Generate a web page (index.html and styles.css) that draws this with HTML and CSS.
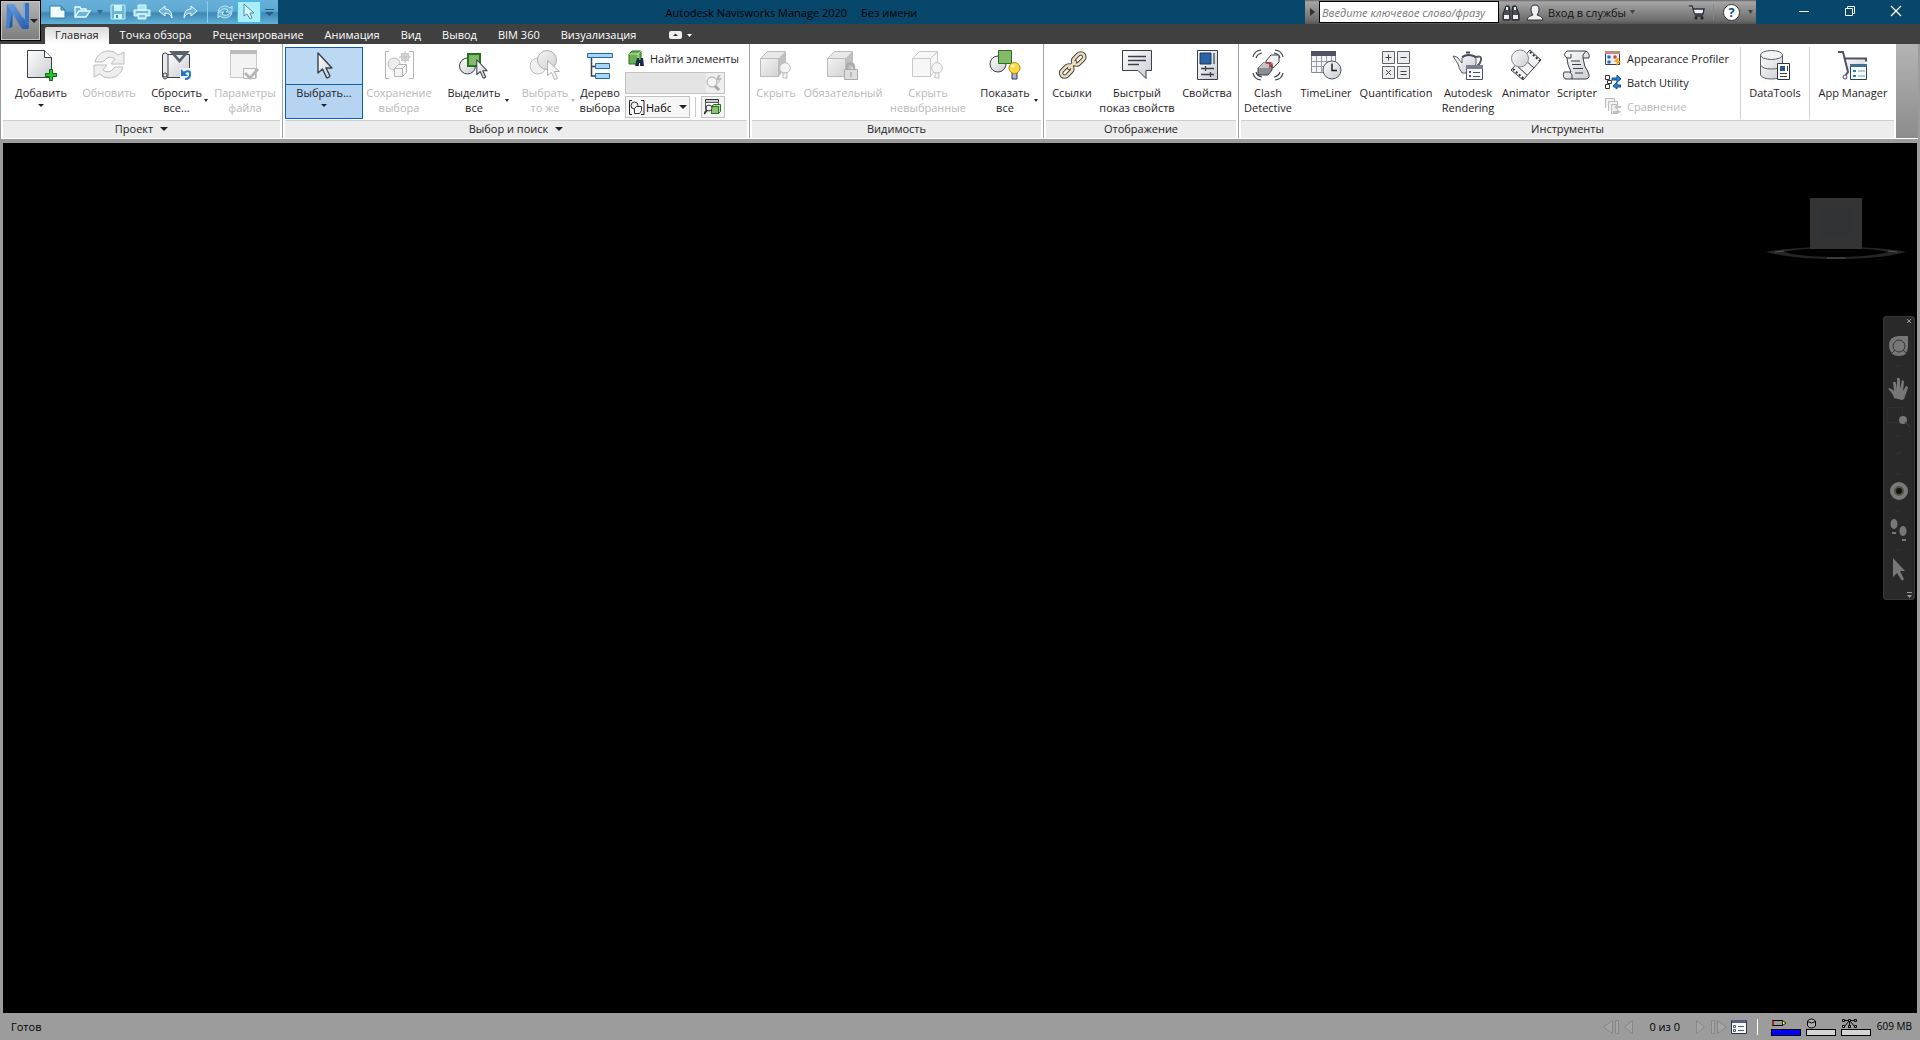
FILE: index.html
```html
<!DOCTYPE html>
<html lang="ru">
<head>
<meta charset="utf-8">
<title>Autodesk Navisworks Manage 2020</title>
<link rel="stylesheet" href="styles.css">
</head>
<body>
<svg class="defs" width="0" height="0" aria-hidden="true">
  <defs>
    <linearGradient id="paper" x1="0" y1="0" x2="1" y2="1"><stop offset="0" stop-color="#fff"/><stop offset="1" stop-color="#c9cbd0"/></linearGradient>
    <linearGradient id="dim" x1="0" y1="0" x2="1" y2="1"><stop offset="0" stop-color="#f4f4f4"/><stop offset="1" stop-color="#d2d2d2"/></linearGradient>
    <linearGradient id="blade" x1="0" y1="0" x2="1" y2="1"><stop offset="0" stop-color="#6ba4e4"/><stop offset="1" stop-color="#2358a8"/></linearGradient>
    <symbol id="cursor" viewBox="0 0 16 27"><path d="M1 1v20l4.500-4 4 8.500q2 1 3.500-1.500l-4-8h6z" fill="url(#paper)" stroke="#3a3f4a" stroke-width="1.400" stroke-linejoin="round"/></symbol>
    <symbol id="bulb" viewBox="0 0 12 18"><circle cx="6" cy="6" r="5.300"/><path d="M4 11h4v5H4z"/></symbol>
  </defs>
</svg>

<header class="titlebar">
  <button class="app-button" aria-label="Меню приложения">
    <svg width="40" height="40" viewBox="0 0 40 40"><path d="M6 3h6v23l-7 2z" fill="#4a82cc"/><path d="M22 2h6v24l-6-6z" fill="#3b72bd"/><path d="M6 3h7l10 16 5 7-1 2h-6L11 12z" fill="url(#blade)"/><path d="M11 12v14l-3 1z" fill="#2a5699"/><path d="M22 2h2v17l-2-3z" fill="#77abe8"/><path d="M29 18h8l-4 4z" fill="#222"/></svg>
  </button>
  <div class="quick">
    <button aria-label="Создать"><svg width="18" height="16" viewBox="0 0 18 16"><path d="M1 2h11l4 4v8H1zM12 2v4h4" fill="#eefcff" stroke="#2f7da5"/></svg></button>
    <button aria-label="Открыть"><svg width="18" height="16" viewBox="0 0 18 16"><path d="M2 13V3h5l1 2h5v2M2 13l4-6h11l-4 6z" fill="#6fb4d5" stroke="#e8fcff" stroke-width="1.300"/></svg></button>
    <button class="slim" aria-label="Последние файлы"><svg width="6" height="4"><path d="M0 0h6L3 4z" fill="#2c6b91"/></svg></button>
    <button aria-label="Сохранить"><svg width="18" height="16" viewBox="0 0 18 16"><path d="M2 1h14v14H2z" fill="#6fb4d5" stroke="#bff0fb"/><path d="M5 1h8v6H5zM5 10h8v5H5z" fill="#c8f6fb"/><path d="M7 11h2v3H7z" fill="#4288ae"/></svg></button>
    <button aria-label="Печать"><svg width="18" height="16" viewBox="0 0 18 16"><path d="M5 1h8v5H5zM1 6h16v6H1zM5 10h8v5H5z" fill="#a9e2f0" stroke="#d9faff"/><path d="M3 8h12M6 12h6" stroke="#4288ae"/></svg></button>
    <button aria-label="Отменить"><svg width="18" height="16" viewBox="0 0 18 16"><path d="M2 7l6-5v3q7 0 7 9-2-5-7-5v3z" fill="#6fb4d5" stroke="#e4fcff"/></svg></button>
    <button aria-label="Повторить"><svg width="18" height="16" viewBox="0 0 18 16"><path d="M16 7l-6-5v3Q3 5 3 14q2-5 7-5v3z" fill="#6fb4d5" stroke="#e4fcff"/></svg></button>
    <i></i>
    <button aria-label="Обновить"><svg width="18" height="16" viewBox="0 0 18 16"><path d="M2 7q2-5 7-5 3 0 5 2l2-2v6h-6l2-2q-4-3-8 1zM16 9q-2 5-7 5-3 0-5-2l-2 2V8h6l-2 2q4 3 8-1z" fill="#6fb4d5" stroke="#b9eaf7"/></svg></button>
    <button class="hot" aria-label="Выбрать"><svg width="12" height="18" viewBox="0 0 12 18"><path d="M1 1v12l3-2 3 5 2-1-2-5h4z" fill="#d8f8fd" stroke="#4a8fae"/></svg></button>
    <button class="more" aria-label="Настроить панель"><svg width="9" height="7"><path d="M0 0h9v1H0zM0 3h9L4.500 7z" fill="#225f86"/></svg></button>
  </div>
  <h1 class="caption"><span>Autodesk Navisworks Manage 2020</span><span>Без имени</span></h1>
  <div class="infocenter">
    <button class="fold" aria-label="Свернуть поиск"><svg width="5" height="8"><path d="M0 0l5 4-5 4z" fill="#333"/></svg></button>
    <input type="text" aria-label="Поиск" placeholder="Введите ключевое слово/фразу">
    <button class="find" aria-label="Найти"><svg width="18" height="17" viewBox="0 0 18 17"><path d="M4 2h3l1 4v10H1v-6zM14 2h-3l-1 4v10h7v-6z" fill="#4a4d55" stroke="#202020"/><path d="M2 11h5v4H2zM11 11h5v4h-5zM4 3h2v3H4zM12 3h2v3h-2z" fill="#eceef2"/></svg></button>
    <button class="sign"><svg width="18" height="17" viewBox="0 0 18 17"><path d="M9 1c-3 0-4 2-4 4s1 5 2 6c-2 1-5 1-6 5h16c-1-4-4-4-6-5 1-1 2-4 2-6s-1-4-4-4z" fill="#f0f1f4" stroke="#2a2c33"/></svg><span>Вход в службы</span><svg width="5" height="4"><path d="M0 0h5L2.500 4z" fill="#444"/></svg></button>
    <button class="cart" aria-label="Магазин"><svg width="18" height="16" viewBox="0 0 18 16"><path d="M1 2h3l3 8h8l1-5H5" fill="#f2f2f2" stroke="#2d3146" stroke-width="1.500"/><path d="M6 6h9l-1 3H7z" fill="#f2f2f2"/><path d="M7 12h8" stroke="#2d3146" stroke-width="1.500"/><circle cx="8" cy="14" r="1.500" fill="#222"/><circle cx="14" cy="14" r="1.500" fill="#222"/></svg></button>
    <button class="help" aria-label="Справка"><b>?</b><svg width="5" height="4"><path d="M0 0h5L2.500 4z" fill="#444"/></svg></button>
  </div>
  <div class="window-controls">
    <button aria-label="Свернуть"><svg width="12" height="12"><path d="M1 6.500h10" stroke="#fff"/></svg></button>
    <button aria-label="Восстановить"><svg width="12" height="12"><path d="M1.500 3.500h7v7h-7zM3.500 3.500v-2h7v7h-2" fill="none" stroke="#fff"/></svg></button>
    <button aria-label="Закрыть"><svg width="12" height="12"><path d="M1 1l10 10M11 1L1 11" stroke="#fff" stroke-width="1.300"/></svg></button>
  </div>
</header>

<nav class="tabs">
  <a class="active" href="#home">Главная</a><a href="#view">Точка обзора</a><a href="#review">Рецензирование</a><a href="#anim">Анимация</a><a href="#look">Вид</a><a href="#out">Вывод</a><a href="#bim">BIM 360</a><a href="#render">Визуализация</a>
  <button aria-label="Свернуть ленту"><svg width="24" height="8" viewBox="0 0 24 8"><rect width="13" height="8" rx="2" fill="#eee"/><path d="M4 5h5L6.500 2.500z" fill="#333"/><path d="M18 3h5l-2.500 3z" fill="#fff"/></svg></button>
</nav>

<main class="ribbon">
  <section class="panel">
    <div class="tools project">
      <button class="tool"><svg class="ico" viewBox="0 0 32 32"><path d="M2.500 1.500h17l7 7v20h-24z" fill="url(#paper)" stroke="#3a3f4a"/><path d="M19.500 1.500v7h7" fill="#fff" stroke="#3a3f4a"/><path d="M24.500 20.500h3v4h4v3h-4v4h-3v-4h-4v-3h4z" fill="#2fbf2f" stroke="#0b6d10"/></svg><span>Добавить</span><em></em></button>
      <button class="tool" disabled><svg class="ico" viewBox="0 0 32 32"><path d="M2 13C4 5 10 2 16 2q6 0 9 4l6-3v12H18l4-5q-6-5-12 3zM30 18c-2 8-8 11-14 11q-6 0-9-4l-6 3V16h13l-4 5q6 5 12-3z" fill="#eee" stroke="#bdbdbd"/></svg><span>Обновить</span></button>
      <button class="tool side"><svg class="ico" viewBox="0 0 32 32"><path d="M5.500 5.500h23v23h-23z" fill="url(#paper)" stroke="#3a3f4a"/><path d="M1.500 6q0-2 2.500-2t3 2v21q-1 3-3 3t-2.500-3z" fill="#e9eaee" stroke="#3a3f4a"/><circle cx="4" cy="26" r="2" fill="none" stroke="#3a3f4a"/><path d="M8 2h21L18.500 14z" fill="#596070"/><path d="M15 6h7l-3.500 4z" fill="#e9e9ee"/><path d="M19 19h11v12H19z" fill="#f4f4f6"/><path d="M22 24q7-4 7 1t-5 5" fill="none" stroke="#1c74c9" stroke-width="2"/><path d="M20 20v7h7z" fill="#1c74c9"/></svg><span>Сбросить<br>все...</span><em></em></button>
      <button class="tool" disabled><svg class="ico" viewBox="0 0 32 32"><path d="M1.500 2.500h26v26h-26z" fill="#f3f3f3" stroke="#c9c9c9"/><path d="M1 1h27v4H1z" fill="#bcbcbc"/><path d="M14.500 19.500h12v10h-12z" fill="#f8f8f8" stroke="#b5b5b5"/><path d="M17 23l4 4 7-8 2 2-9 10-6-6z" fill="#b5b5b5"/></svg><span>Параметры<br>файла</span></button>
    </div>
    <h2 class="drop">Проект</h2>
  </section>

  <section class="panel">
    <div class="tools select">
      <button class="tool chosen"><svg class="ico" viewBox="0 0 32 32"><use href="#cursor" x="9" y="3" width="16" height="27"/></svg><span>Выбрать...</span><em></em></button>
      <button class="tool" disabled><svg class="ico" viewBox="0 0 32 32"><path d="M6 2.500H2.500v27H6M26 2.500h4.500v27H26" fill="none" stroke="#b5b5b5"/><circle cx="11" cy="15" r="6" fill="#eee" stroke="#bbb"/><path d="M11.500 19.500l4-4h8v8l-4 4h-8zM11.500 19.500h8v8M19.500 19.500l4-4" fill="#f4f4f4" stroke="#b5b5b5"/><circle cx="22" cy="8" r="4" fill="#ddd" stroke="#c2c2c2"/><path d="M22 2v12M16 8h12M18 4l8 8M26 4l-8 8" stroke="#c2c2c2"/></svg><span>Сохранение<br>выбора</span></button>
      <button class="tool side"><svg class="ico" viewBox="0 0 32 32"><circle cx="9.500" cy="17" r="8" fill="url(#paper)" stroke="#3a3f4a"/><path d="M10 5h12v12H10z" fill="#83b969" stroke="#23721d" stroke-width="2"/><use href="#cursor" x="18" y="10" width="12" height="20"/></svg><span>Выделить<br>все</span><em></em></button>
      <button class="tool side narrow" disabled><svg class="ico" viewBox="0 0 32 32"><circle cx="9" cy="17" r="8" fill="#f1f1f1" stroke="#bdbdbd"/><circle cx="18" cy="11" r="9.500" fill="url(#dim)" stroke="#b0b0b0"/><path d="M18.500 11.500v15l4-3 3 7 3-1-3-7h5z" fill="#f6f6f6" stroke="#b0b0b0"/></svg><span>Выбрать<br>то же</span><em></em></button>
      <button class="tool"><svg class="ico" viewBox="0 0 32 32"><path d="M7.500 8v19H13M7.500 17.500H13" fill="none" stroke="#3a3f4a" stroke-width="1.500"/><path d="M3.500 4.500h25v4h-25zM11.500 14.500h14v5h-14zM11.500 24.500h14v5h-14z" fill="#a8d5f4" stroke="#1c6ca5"/></svg><span>Дерево<br>выбора</span></button>
      <div class="finder">
        <button class="row"><svg width="16" height="18" viewBox="0 0 16 18"><path d="M1 5l3-3h9v8l-3 5H1z" fill="#6cae55" stroke="#23721d"/><path d="M1 5h9v9M10 5l3-3" fill="none" stroke="#c4e5b0"/><path d="M9 9h2v2h2V9h2l1 8h-4v-3h-1v3H7z" fill="#1b2c4c"/></svg><span>Найти элементы</span></button>
        <div class="quickfind"><input type="text" disabled aria-label="Быстрый поиск"><button disabled aria-label="Искать"><svg width="16" height="18" viewBox="0 0 16 18"><circle cx="6" cy="8" r="5" fill="#f4f4f4" stroke="#a5a5a5"/><path d="M9 12l4 4" stroke="#a5a5a5" stroke-width="3"/><path d="M12 1l-2 5h3l-2 5 5-7h-3l2-3z" fill="#bbb"/></svg></button></div>
        <div class="sets">
          <div class="combo"><svg width="18" height="18" viewBox="0 0 18 18"><path d="M4 1.500H1.500v14H4M13 1.500h3v14h-3" fill="none" stroke="#222"/><circle cx="6.500" cy="6.500" r="3.500" fill="#eee" stroke="#333"/><path d="M6.500 9.500l2-2h5v4l-2 3h-5z" fill="#fff" stroke="#333"/></svg><select aria-label="Наборы"><option>Наборы</option></select></div>
          <button class="inspect" aria-label="Инспектор выбора"><svg width="18" height="18" viewBox="0 0 18 18"><path d="M1.500 1.500h13v3h-13z" fill="#c9ccd2" stroke="#333"/><path d="M1.500 4.500h13v7h-13z" fill="#fff" stroke="#555"/><path d="M7.500 8.500l2-2h7v7l-2 2h-7z" fill="#b7dca6" stroke="#23721d"/><path d="M7.500 8.500h7v7h-7z" fill="#8cc474" stroke="#23721d"/><circle cx="5" cy="10" r="3" fill="#eee" stroke="#333"/><path d="M3 12l-3 4" stroke="#333" stroke-width="2"/></svg></button>
        </div>
      </div>
    </div>
    <h2 class="drop">Выбор и поиск</h2>
  </section>

  <section class="panel">
    <div class="tools visible">
      <button class="tool" disabled><svg class="ico" viewBox="0 0 32 32"><path d="M.5 9.500l7-7h18v15l-7 10H.5z" fill="#e8e8e8" stroke="#bbb"/><path d="M.5 9.500h18v18H.5z" fill="url(#dim)" stroke="#bbb"/><path d="M18.500 9.500l7-7v15l-7 10z" fill="#bfbfbf"/><use href="#bulb" x="19" y="13" width="12" height="18" fill="#f3f3f3" stroke="#bbb"/></svg><span>Скрыть</span></button>
      <button class="tool" disabled><svg class="ico" viewBox="0 0 32 32"><path d="M.5 9.500l7-7h18v15l-7 10H.5z" fill="#e8e8e8" stroke="#bbb"/><path d="M.5 9.500h18v18H.5z" fill="url(#dim)" stroke="#bbb"/><path d="M18.500 9.500l7-7v15l-7 10z" fill="#bfbfbf"/><path d="M20 21v-3q0-3.500 3.500-3.500T27 18v3" fill="none" stroke="#aaa" stroke-width="2.500"/><path d="M17.500 20.500h13v10h-13z" fill="#ddd" stroke="#aaa"/><path d="M24 23v5" stroke="#999"/></svg><span>Обязательный</span></button>
      <button class="tool" disabled><svg class="ico" viewBox="0 0 32 32"><path d="M.5 9.500l7-7h18v15l-7 10H.5z" fill="#f7f7f7" stroke="#c9c9c9"/><path d="M.5 9.500h18v18M18.500 9.500l7-7" fill="none" stroke="#c9c9c9"/><use href="#bulb" x="19" y="13" width="12" height="18" fill="#f5f5f5" stroke="#c4c4c4"/></svg><span>Скрыть<br>невыбранные</span></button>
      <button class="tool side"><svg class="ico" viewBox="0 0 32 32"><circle cx="9" cy="15" r="8" fill="url(#paper)" stroke="#3a3f4a"/><path d="M9.500 1.500h13v13h-13z" fill="#83b969" stroke="#23721d"/><path d="M23 24h5v6h-5z" fill="#aeb6c8" stroke="#333a50"/><circle cx="25.500" cy="19" r="5.500" fill="#ffd83c" stroke="#b5851a"/><circle cx="24" cy="17" r="2" fill="#fff3a8"/></svg><span>Показать<br>все</span><em></em></button>
    </div>
    <h2>Видимость</h2>
  </section>

  <section class="panel">
    <div class="tools display">
      <button class="tool"><svg class="ico" viewBox="0 0 32 32"><g fill="none" stroke-linecap="round"><g stroke="#4a4438" stroke-width="4.500"><rect x="4" y="19" width="13" height="7" rx="3.500" transform="rotate(-45 10 22)"/><rect x="16" y="7" width="13" height="7" rx="3.500" transform="rotate(-45 22 10)"/><path d="M13 19l6-6"/></g><g stroke="#ecdfc0" stroke-width="2.500"><rect x="4" y="19" width="13" height="7" rx="3.500" transform="rotate(-45 10 22)"/><rect x="16" y="7" width="13" height="7" rx="3.500" transform="rotate(-45 22 10)"/><path d="M13 19l6-6"/></g></g></svg><span>Ссылки</span></button>
      <button class="tool"><svg class="ico" viewBox="0 0 32 32"><path d="M1.500 1.500h29v20H25v8l-8-8H1.500z" fill="url(#paper)" stroke="#3a3f4a"/><path d="M7 7.500h18M7 11.500h18M7 15.500h11" stroke="#3a3f4a" stroke-width="1.500"/></svg><span>Быстрый<br>показ свойств</span></button>
      <button class="tool"><svg class="ico" viewBox="0 0 32 32"><path d="M6.500 1.500h20v29h-20z" fill="url(#paper)" stroke="#3a3f4a"/><path d="M9 4h11v11H9z" fill="#2b64a5" stroke="#1b3862"/><path d="M22 4h2v11h-2z" fill="#777f90"/><path d="M10 19.500h13M10 25.500h13M14.500 17v5M19.500 23v5" stroke="#3a3f4a" stroke-width="1.300"/></svg><span>Свойства</span></button>
    </div>
    <h2>Отображение</h2>
  </section>

  <section class="panel">
    <div class="tools instruments">
      <button class="tool"><svg class="ico" viewBox="0 0 32 32"><path d="M1 8q1-6 8-7M4 9q1-4 6-5M31 8q-1-6-8-7M28 9q-1-4-6-5M1 24q1 6 8 7M4 23q1 4 6 5M31 24q-1 6-8 7M28 23q-1 4-6 5" fill="none" stroke="#3a3f4a" stroke-width="1.200"/><path d="M14 12l5-6h8v7l-6 6h-7z" fill="#f2f2f4" stroke="#3a3f4a"/><path d="M6 19l5-5h9v7l-4 5H6z" fill="#8b8e94" stroke="#3a3f4a"/><path d="M6 19l5-5h9l-4 5z" fill="#c3c5c9"/><path d="M14 14h4v3h3" fill="none" stroke="#c8201c" stroke-width="1.500"/></svg><span>Clash<br>Detective</span></button>
      <button class="tool"><svg class="ico" viewBox="0 0 32 32"><path d="M1.500 3.500h24v20h-24z" fill="#f5f5f7" stroke="#858993"/><path d="M1 2h25v5H1z" fill="#4d5362"/><path d="M1 12.500h25M1 17.500h25M6.500 7v16M11.500 7v16M16.500 7v16M21.500 7v16" stroke="#9a9ea6"/><circle cx="22" cy="21" r="9" fill="url(#paper)" stroke="#4d5362"/><path d="M22 14.500v7h5" fill="none" stroke="#222" stroke-width="1.500"/></svg><span>TimeLiner</span></button>
      <button class="tool"><svg class="ico" viewBox="0 0 32 32"><path d="M2.500 2.500h12v12h-12zM17.500 2.500h12v12h-12zM2.500 17.500h12v12h-12zM17.500 17.500h12v12h-12z" fill="#ececef" stroke="#5f636c"/><path d="M5.500 8.500h6M8.500 5.500v6M20.500 8.500h6M6 21l5 5M11 21l-5 5M20.500 22.500h6M20.500 25.500h6" stroke="#444"/></svg><span>Quantification</span></button>
      <button class="tool"><svg class="ico" viewBox="0 0 32 32"><path d="M1 7l4 1 5 6V9q7-6 14 0v6l-4 9H10q-3-4-4-9z" fill="url(#paper)" stroke="#5a5e68"/><path d="M24 8q6-2 5 3t-6 7" fill="none" stroke="#555a66" stroke-width="2"/><path d="M10 8q6-4 14 0M14 3.500h4" fill="none" stroke="#444a57" stroke-width="2"/><path d="M14.500 16.500h16v14h-16z" fill="#f7f8fa" stroke="#4d5362"/><path d="M14 16h17v4H14z" fill="#7a808e"/><path d="M17 22h2v2h-2zM17 26h2v2h-2z" fill="#4d5362"/><path d="M21 23.500h7M21 27.500h7" stroke="#4d5362"/></svg><span>Autodesk<br>Rendering</span></button>
      <button class="tool"><svg class="ico" viewBox="0 0 32 32"><path d="M1 21L20 1l11 10-18 20z" fill="#f2f2f4" stroke="#3a3f4a"/><path d="M3 20l11 10M20 3l10 9" stroke="#333" stroke-width="2" stroke-dasharray="2 2"/><path d="M6 16l11 10M13 9l11 10" stroke="#333"/><circle cx="10" cy="9.500" r="8.500" fill="url(#paper)" stroke="#85888e"/></svg><span>Animator</span></button>
      <button class="tool"><svg class="ico" viewBox="0 0 32 32"><path d="M6 2h19q4 2 3 7h-6q1 9 5 14 3 6-2 7H5q-4-1-2-7h7Q6 15 6 9 1 6 6 2z" fill="url(#paper)" stroke="#3a3f4a"/><path d="M6 9h4V5M22 9V6l3-4M9 23q3 2 2 7" fill="none" stroke="#3a3f4a"/><path d="M10 12h9M11 15.500h9M12 19.500h10M14 24h8" stroke="#3a3f4a"/></svg><span>Scripter</span></button>
      <div class="list">
        <button class="row"><svg width="16" height="16" viewBox="0 0 16 16"><path d="M.5 1.500h14v13H.5z" fill="#eceef4" stroke="#3a3f4a"/><path d="M0 1h15v3H0z" fill="#b98f86"/><circle cx="4" cy="7" r="1.800" fill="#2d70c0"/><circle cx="10" cy="7" r="1.800" fill="#d24a32"/><circle cx="4" cy="12" r="1.800" fill="#2d70c0"/><path d="M12 8l-3 4h3l-1 4 5-5h-3l1-3z" fill="#ffa21b"/></svg><span>Appearance Profiler</span></button>
        <button class="row"><svg width="16" height="16" viewBox="0 0 16 16"><path d="M.5 1.500h4v4h-4zM2.500 6.500h4v3h-4zM.5 10.500h4v4h-4z" fill="#fff" stroke="#333"/><path d="M7 4h5V1l4 4-4 3V6H7zM16 11h-4V8l-4 4 4 3v-2h4z" fill="#1f86e0" stroke="#124f92" stroke-width="1"/></svg><span>Batch Utility</span></button>
        <button class="row" disabled><svg width="16" height="16" viewBox="0 0 16 16"><path d="M.5 10V.5h9V4M3.500 13V3.500h9V6" fill="#f3f3f3" stroke="#bbb"/><path d="M6.500 6.500h6v9h-6z" fill="#eee" stroke="#bbb"/><path d="M16 8h-3V6L9 9l4 3v-2h3zM8 13h4v-2l4 3-4 2v-1H8z" fill="#c2c2c2"/></svg><span>Сравнение</span></button>
      </div>
      <button class="tool ruled"><svg class="ico" viewBox="0 0 32 32"><path d="M1.500 6v20q2 4 11 4t11-4V6" fill="url(#paper)" stroke="#5a5e68"/><ellipse cx="12.500" cy="6" rx="11" ry="4.500" fill="#f4f4f6" stroke="#5a5e68"/><path d="M1.500 16q2 4 11 4t11-4" fill="none" stroke="#5a5e68"/><path d="M18.500 14.500h12v16h-12z" fill="#fff" stroke="#2f3440"/><path d="M21 17h5v5h-5z" fill="#28588f"/><path d="M28 17h1v5h-1zM21 24h7v1h-7zM21 27h7v1h-7z" fill="#3a3f4a"/></svg><span>DataTools</span></button>
      <button class="tool ruled"><svg class="ico" viewBox="0 0 32 32"><path d="M7 9h22l-3 12H10z" fill="url(#paper)"/><path d="M1 3h5l5 20-3 4M7 9.500h22v3" fill="none" stroke="#4d5267" stroke-width="2"/><circle cx="8" cy="28" r="2" fill="#fff" stroke="#4d5267"/><path d="M13.500 15.500h16v15h-16z" fill="#fff" stroke="#27455e"/><path d="M13 15h17v3H13z" fill="#3d6f96"/><path d="M16 21h3v2h-3zM16 26h3v2h-3z" fill="#1e86d0"/><path d="M21 22h7M21 27h7" stroke="#4f9dd0"/></svg><span>App Manager</span></button>
    </div>
    <h2>Инструменты</h2>
  </section>
</main>

<section class="canvas" aria-label="Сцена">
  <svg class="viewcube" width="142" height="62" viewBox="0 0 142 62"><path d="M1 54q22-5 70-5t70 5q-25 7-70 7T1 54zm18 0q18 5 52 5t52-5q-18-4-52-4t-52 4z" fill="#252525" fill-rule="evenodd"/><path d="M10 54l9-1M123 53l9 1M62 60h18" stroke="#555"/><rect x="45" width="52" height="51" fill="#343434"/><rect x="55" y="10" width="34" height="30" fill="#313436"/></svg>
  <div class="navbar">
    <svg width="32" height="284" viewBox="0 0 32 284"><g fill="#777"><path d="M24 3l4 4m0-4l-4 4" stroke="#999"/><path d="M6 30q0-10 10-10h9v10q0 10-9 10T6 30z"/><circle cx="16" cy="30" r="6" fill="none" stroke="#333"/><path d="M9 37l3-3M23 37l-3-3" stroke="#333"/><path d="M11 82q-1-5-6-9 2-2 6 2l-1-9q2-1 3 1l1 6V62q2-1 3 1v10l2-9q2 0 2 2l-1 9 3-5q2 0 2 2l-4 11-2 1z"/><path d="M4.500 91.500h15v15h-15z" fill="none" stroke="#303030"/><circle cx="20" cy="104" r="4"/><path d="M22 106l5 5" stroke="#444"/><path d="M13 50h4M13 120h4M13 138l6-2M13 158h4M13 195h4M13 234h4" stroke="#333"/></g><circle cx="16" cy="175" r="7" fill="#51523f" stroke="#7a7a7a" stroke-width="4"/><circle cx="16" cy="175" r="3" fill="#111"/><g fill="#777"><ellipse cx="11" cy="208" rx="3.500" ry="5"/><ellipse cx="20" cy="215" rx="3.500" ry="5"/><path d="M9 216h4v2H9zM19 223h4v2h-4zM10 242v19l4-4 5 8 2-2-4-8h5z"/><path d="M24 276h5v1h-5zM24 279h5l-2.500 3z" fill="#999"/></g></svg>
  </div>
</section>

<footer class="status">
  <span>Готов</span>
  <div class="sheets">
    <button disabled aria-label="Первый лист"><svg width="18" height="16"><path d="M10.500 1.500v13l-9-6.500zM13.500 1.500h3v13h-3z" fill="#a5a5a5" stroke="#868686"/></svg></button>
    <button disabled aria-label="Предыдущий лист"><svg width="12" height="16"><path d="M9.500 1.500v13L1.500 8z" fill="#a5a5a5" stroke="#868686"/></svg></button>
    <output>0 из 0</output>
    <button disabled aria-label="Следующий лист"><svg width="12" height="16"><path d="M1.500 1.500v13l8-6.500z" fill="#a5a5a5" stroke="#868686"/></svg></button>
    <button disabled aria-label="Последний лист"><svg width="18" height="16"><path d="M7.500 1.500v13l9-6.500zM1.500 1.500h3v13h-3z" fill="#a5a5a5" stroke="#868686"/></svg></button>
    <button aria-label="Браузер листов"><svg width="16" height="16"><path d="M.5 1.500h15v13H.5z" fill="#f5f6fa" stroke="#2e3440"/><path d="M1 1h14v3H1z" fill="#56607a"/><path d="M2.500 6.500h2v2h-2zM2.500 10.500h2v2h-2zM7 7.500h6M7 11.500h6" fill="none" stroke="#4e5a70"/></svg></button>
  </div>
  <div class="meters">
    <div><svg width="30" height="11"><path d="M1.500 2.500h10v5h-10z" fill="#9c9c9c" stroke="#000"/><path d="M1 3h2v4H1z" fill="#b02020"/><path d="M11.500 2.500L15 5l-3.500 2.500z" fill="#ff3" stroke="#222"/></svg><i class="full"></i></div>
    <div><svg width="30" height="11"><path d="M1.500 3v5q4 4 8 0V3q-4-4-8 0zM1.500 3.500q4 3 8 0" fill="#b0b0b0" stroke="#000"/></svg><i></i></div>
    <div><svg width="30" height="11"><path d="M2 2.500h13M8.500 2v8M8 3L3 9M9 3l5 6" stroke="#000"/><path d="M1.500 1.500h2v2h-2zM7.500 1.500h2v2h-2zM13.500 1.500h2v2h-2zM1.500 7.500h2v2h-2zM7.500 7.500h2v2h-2zM13.500 7.500h2v2h-2z" fill="#b0b0b0" stroke="#000"/></svg><i></i></div>
  </div>
  <span class="memory">609 MB</span>
</footer>
</body>
</html>
```

FILE: styles.css
```css
* { box-sizing: border-box; }
body {
  margin: 0;
  min-height: 100vh;
  display: flex;
  flex-direction: column;
  background: #9c9c9c;
  color: #1f2228;
  font: 11px/15px "Open Sans", "Noto Sans", sans-serif;
}
button, input, select { font: inherit; color: inherit; }
button { margin: 0; padding: 0; border: 0; background: none; }
h1, h2 { margin: 0; font: inherit; }
svg { display: block; flex: none; }
.defs { position: absolute; }

/* Title bar */
.titlebar { position: relative; display: flex; height: 24px; background: #06476b; }
.app-button {
  position: absolute; left: 0; top: 0; z-index: 2;
  width: 41px; height: 41px; overflow: hidden;
  border: 1px solid #000;
  background: linear-gradient(#b5b5b5, #7c7c7c);
  box-shadow: inset 0 0 0 1px #c4c4c4;
}
.quick {
  display: flex; align-items: center;
  width: 278px; padding-left: 46px;
  background: linear-gradient(#68b0d9, #5ea9d3 45%, #4187b3 55%, #5fb2d8);
}
.quick button { flex: none; width: 24px; height: 24px; display: grid; place-items: center; }
.quick .slim { width: 12px; }
.quick .hot { background: #a9eef8; border: 1px solid #38bdf0; height: 22px; }
.quick .more { width: 17px; }
.quick i { width: 1px; height: 22px; background: #8ccbe6; margin: 0 5px; }
.caption { flex: 1; display: flex; justify-content: center; align-items: center; gap: 14px; color: #000; }
.infocenter {
  display: flex; align-items: center; width: 451px;
  background: linear-gradient(#666, #a6a6a6 8%, #6c6c6c 85%, #555);
}
.fold { width: 14px; display: grid; place-items: center; }
.infocenter input {
  width: 180px; height: 22px; padding: 0 2px;
  border: 1px solid #000; background: #fff; font-style: italic;
}
.infocenter input::placeholder { color: #777; opacity: 1; }
.find { padding: 0 3px; }
.sign { display: flex; align-items: center; gap: 4px; padding-left: 3px; color: #111; }
.cart { margin-left: auto; padding-right: 7px; border-right: 1px solid #888; }
.help { display: flex; align-items: center; gap: 8px; padding: 0 3px 0 9px; }
.help b { width: 17px; height: 17px; border: 1px solid #333; border-radius: 50%; background: #fff; color: #0c4d9e; font-size: 13px; }
.window-controls { display: flex; width: 164px; padding-left: 25px; }
.window-controls button { width: 46px; height: 22px; display: grid; place-items: center; }

/* Ribbon tabs */
.tabs { display: flex; align-items: flex-end; gap: 1px; height: 20px; padding-left: 45px; background: #404040; }
.tabs a { height: 17px; padding: 0 10px; color: #fff; text-decoration: none; }
.tabs .active { background: linear-gradient(#d8d8d8, #fff); color: #1f2228; border-radius: 2px 2px 0 0; }
.tabs button { padding: 0 22px 5px; }

/* Ribbon */
.ribbon {
  display: flex; height: 95px; margin: 0 2px 0 1px;
  border-bottom: 1px solid #fff;
  background: linear-gradient(#b4b4b4, #8c8c8c);
}
.panel { display: flex; flex-direction: column; flex: none; border-right: 1px solid #a2a2a2; background: #fff; }
.panel:last-child { border-right: 0; }
.tools { display: grid; flex: 1; }
.project { grid-template-columns: 68px 68px 67px 70px; padding: 0 2px 0 6px; }
.select { grid-template-columns: 78px 72px 78px 64px 46px 126px; padding-left: 2px; }
.visible { grid-template-columns: 44px 90px 80px 74px; padding: 0 1px 0 4px; }
.display { grid-template-columns: 48px 82px 58px; padding: 0 2px 0 4px; }
.instruments { grid-template-columns: 54px 62px 78px 66px 50px 52px 137px 69px 87px; padding-left: 2px; }
.panel h2 {
  height: 18px; margin: 0 2px; border-top: 1px solid #cfcfcf;
  background: #ededed; text-align: center; line-height: 16px;
}
.drop::after {
  content: ""; display: inline-block; margin-left: 7px; vertical-align: 2px;
  border: 4px solid transparent; border-top-color: #1f2228; border-bottom: 0;
}
.tool { position: relative; display: flex; flex-direction: column; align-items: center; gap: 4px; padding-top: 5px; white-space: nowrap; }
.tool span { text-align: center; }
.tool:disabled, .row:disabled { color: #b8b8b8; }
.ico { width: 32px; height: 32px; }
.tool em { border: 3px solid transparent; border-top-color: currentColor; border-bottom: 0; }
.side em { position: absolute; right: 4px; top: 55px; border-width: 2px; border-top-width: 3px; border-bottom: 0; }
.project .side em, .side.narrow em { right: 2px; }
.chosen {
  margin: 3px 0 1px; padding-top: 1px; border: 1px solid #0b62b4;
  background: linear-gradient(#bcd9f4 36px, #0b62b4 36px, #0b62b4 37px, #b4d4f2 37px);
}
.ruled { border-left: 1px solid #d2d2d2; margin: 3px 0 1px; padding-top: 2px; }

.row { display: flex; align-items: center; gap: 6px; white-space: nowrap; }
.finder { padding: 5px 0 0 2px; display: flex; flex-direction: column; }
.finder .row { height: 18px; margin: 0 0 5px 3px; }
.quickfind { display: flex; width: 100px; height: 22px; border: 1px solid #c2c2c2; background: #e4e4e4; }
.quickfind input { flex: 1; min-width: 0; border: 0; background: none; }
.quickfind button { width: 18px; background: #efefef; }
.sets { display: flex; justify-content: space-between; width: 100px; margin-top: 2px; }
.combo { position: relative; width: 65px; height: 22px; border: 1px solid #c2c2c2; background: #f6f6f6; }
.combo::after {
  content: ""; position: absolute; right: 2px; top: 8px;
  border: 4px solid transparent; border-top-color: #222; border-bottom: 0; pointer-events: none;
}
.combo svg { position: absolute; left: 2px; top: 2px; }
.combo select { width: 100%; height: 20px; appearance: none; border: 0; padding: 0 18px 0 20px; background: none; text-overflow: clip; color: #000; }
.inspect { width: 24px; height: 22px; border: 1px solid #c2c2c2; background: #f4f4f4; display: grid; place-items: center; box-shadow: -6px 0 0 -1px #fff, -7px 0 0 -1px #ccc; }
.list { display: flex; flex-direction: column; padding: 2px 0 0 2px; }
.list .row { height: 24px; }

/* Scene */
.canvas { position: relative; flex: 1; margin: 4px 3px 0; background: #000; }
.viewcube { position: absolute; right: 10px; top: 55px; }
.navbar { position: absolute; right: 2px; top: 173px; border-radius: 4px; background: #292929; box-shadow: inset 0 0 0 1px #383838; }

/* Status bar */
.status { display: flex; align-items: center; height: 27px; padding: 0 8px 0 11px; color: #000; }
.sheets { display: flex; align-items: center; gap: 3px; margin-left: auto; padding-right: 10px; border-right: 1px solid #fff; }
.sheets output { width: 54px; text-align: center; }
.meters { display: flex; gap: 5px; margin: 0 6px 0 13px; }
.meters i { display: block; width: 30px; height: 7px; border: 1px solid #000; background: #d4d4d4; }
.meters .full { background: #00f; }
.memory { font-size: 10px; }
```
